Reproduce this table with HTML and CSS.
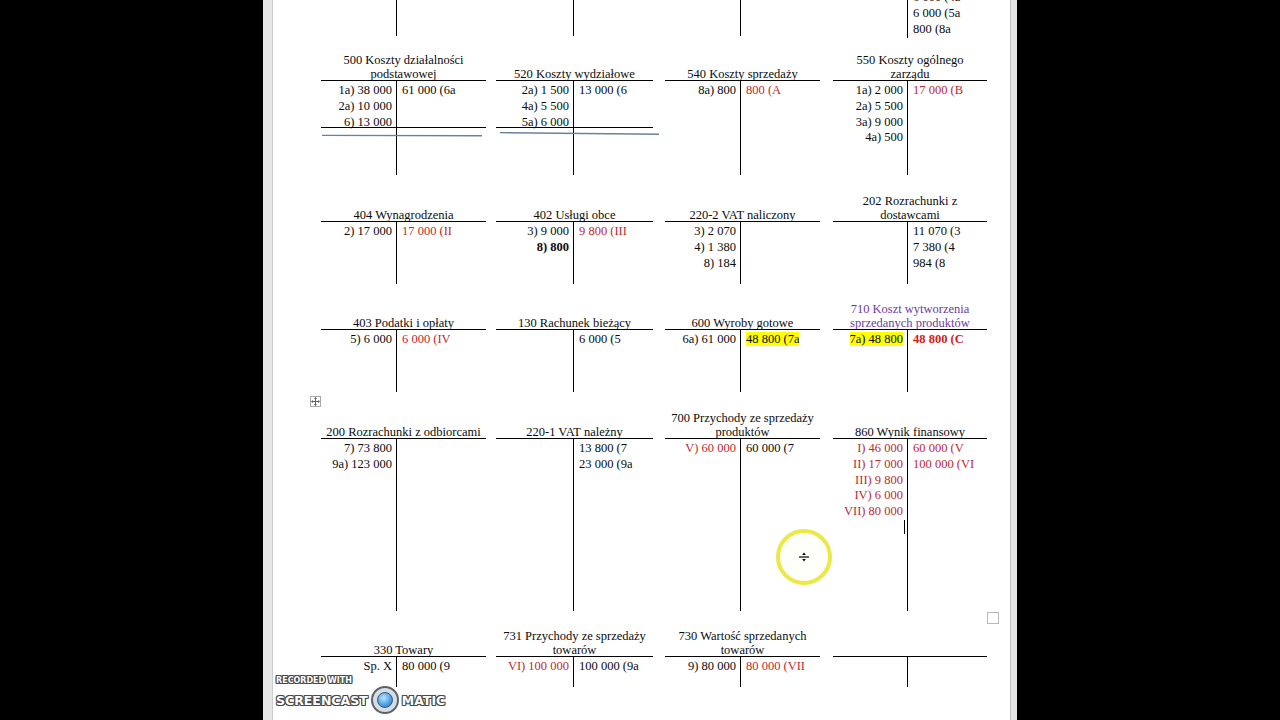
FILE: index.html
```html
<!DOCTYPE html>
<html lang="pl">
<head>
<meta charset="utf-8">
<title>Konta</title>
<link rel="stylesheet" href="styles.css">
</head>
<body>
<div class="viewer">
  <div class="page">
    <div class="sheet">

      <div class="row r0">
        <div class="acct"><div class="body"><div class="dr"></div><div class="cr"></div></div></div>
        <div class="acct"><div class="body"><div class="dr"></div><div class="cr"></div></div></div>
        <div class="acct"><div class="body"><div class="dr"></div><div class="cr"></div></div></div>
        <div class="acct"><div class="body"><div class="dr"></div><div class="cr">
          <div>&nbsp;</div><div>&nbsp;</div><div>&nbsp;</div>
          <div>6 000 (4a</div><div>6 000 (5a</div><div>800 (8a</div>
        </div></div></div>
      </div>

      <div class="row r1">
        <div class="acct">
          <div class="title"><span>500 Koszty działalności<br>podstawowej</span></div>
          <div class="body">
            <div class="dr"><div>1a) 38 000</div><div>2a) 10 000</div><div>6) 13 000</div></div>
            <div class="cr"><div>61 000 (6a</div></div>
            <div class="rule"></div>
            <svg class="ink" width="170" height="60" viewBox="0 0 170 60"><path d="M1 54.4 L161 54.8" /></svg>
          </div>
        </div>
        <div class="acct">
          <div class="title"><span>520 Koszty wydziałowe</span></div>
          <div class="body">
            <div class="dr"><div>2a) 1 500</div><div>4a) 5 500</div><div>5a) 6 000</div></div>
            <div class="cr"><div>13 000 (6</div></div>
            <div class="rule"></div>
            <svg class="ink" width="170" height="60" viewBox="0 0 170 60"><path d="M4 51.6 L163 53.2" /></svg>
          </div>
        </div>
        <div class="acct">
          <div class="title"><span>540 Koszty sprzedaży</span></div>
          <div class="body">
            <div class="dr"><div>8a) 800</div></div>
            <div class="cr"><div class="red">800 (A</div></div>
          </div>
        </div>
        <div class="acct">
          <div class="title"><span>550 Koszty ogólnego<br>zarządu</span></div>
          <div class="body">
            <div class="dr"><div>1a) 2 000</div><div>2a) 5 500</div><div>3a) 9 000</div><div>4a) 500</div></div>
            <div class="cr"><div class="red">17 000 (B</div></div>
          </div>
        </div>
      </div>

      <div class="row r2">
        <div class="acct">
          <div class="title"><span>404 Wynagrodzenia</span></div>
          <div class="body">
            <div class="dr"><div>2) 17 000</div></div>
            <div class="cr"><div class="red">17 000 (II</div></div>
          </div>
        </div>
        <div class="acct">
          <div class="title"><span>402 Usługi obce</span></div>
          <div class="body">
            <div class="dr"><div>3) 9 000</div><div class="b">8) 800</div></div>
            <div class="cr"><div class="red">9 800 (III</div></div>
          </div>
        </div>
        <div class="acct">
          <div class="title"><span>220-2 VAT naliczony</span></div>
          <div class="body">
            <div class="dr"><div>3) 2 070</div><div>4) 1 380</div><div>8) 184</div></div>
            <div class="cr"></div>
          </div>
        </div>
        <div class="acct">
          <div class="title"><span>202 Rozrachunki z<br>dostawcami</span></div>
          <div class="body">
            <div class="dr"></div>
            <div class="cr"><div>11 070 (3</div><div>7 380 (4</div><div>984 (8</div></div>
          </div>
        </div>
      </div>

      <div class="row r3">
        <div class="acct">
          <div class="title"><span>403 Podatki i opłaty</span></div>
          <div class="body">
            <div class="dr"><div>5) 6 000</div></div>
            <div class="cr"><div class="red">6 000 (IV</div></div>
          </div>
        </div>
        <div class="acct">
          <div class="title"><span>130 Rachunek bieżący</span></div>
          <div class="body">
            <div class="dr"></div>
            <div class="cr"><div>6 000 (5</div></div>
          </div>
        </div>
        <div class="acct">
          <div class="title"><span>600 Wyroby gotowe</span></div>
          <div class="body">
            <div class="dr"><div>6a) 61 000</div></div>
            <div class="cr"><div><span class="hl">48 800 (7a</span></div></div>
          </div>
        </div>
        <div class="acct">
          <div class="title purple"><span>710 Koszt wytworzenia<br>sprzedanych produktów</span></div>
          <div class="body">
            <div class="dr"><div><span class="hl">7a) 48 800</span></div></div>
            <div class="cr"><div class="red-b">48 800 (C</div></div>
          </div>
        </div>
      </div>

      <div class="row r4">
        <div class="acct">
          <div class="title"><span>200 Rozrachunki z odbiorcami</span></div>
          <div class="body">
            <div class="dr"><div>7) 73 800</div><div>9a) 123 000</div></div>
            <div class="cr"></div>
          </div>
        </div>
        <div class="acct">
          <div class="title"><span>220-1 VAT należny</span></div>
          <div class="body">
            <div class="dr"></div>
            <div class="cr"><div>13 800 (7</div><div>23 000 (9a</div></div>
          </div>
        </div>
        <div class="acct">
          <div class="title"><span>700 Przychody ze sprzedaży<br>produktów</span></div>
          <div class="body">
            <div class="dr"><div class="red">V) 60 000</div></div>
            <div class="cr"><div>60 000 (7</div></div>
          </div>
        </div>
        <div class="acct">
          <div class="title"><span>860 Wynik finansowy</span></div>
          <div class="body">
            <div class="dr red">
              <div>I) 46 000</div><div>II) 17 000</div><div>III) 9 800</div><div>IV) 6 000</div><div>VII) 80 000</div>
              <div><span class="caret"></span></div>
            </div>
            <div class="cr red"><div>60 000 (V</div><div>100 000 (VI</div></div>
          </div>
        </div>
      </div>

      <div class="row r5">
        <div class="acct">
          <div class="title"><span>330 Towary</span></div>
          <div class="body">
            <div class="dr"><div>Sp. X</div></div>
            <div class="cr"><div>80 000 (9</div></div>
          </div>
        </div>
        <div class="acct">
          <div class="title"><span>731 Przychody ze sprzedaży<br>towarów</span></div>
          <div class="body">
            <div class="dr"><div class="red">VI) 100 000</div></div>
            <div class="cr"><div>100 000 (9a</div></div>
          </div>
        </div>
        <div class="acct">
          <div class="title"><span>730 Wartość sprzedanych<br>towarów</span></div>
          <div class="body">
            <div class="dr"><div>9) 80 000</div></div>
            <div class="cr"><div class="red">80 000 (VII</div></div>
          </div>
        </div>
        <div class="acct">
          <div class="title"><span></span></div>
          <div class="body">
            <div class="dr"></div>
            <div class="cr"></div>
          </div>
        </div>
      </div>

    </div>
  </div>
</div>

<div class="handle">
  <svg width="9" height="9" viewBox="0 0 9 9"><path d="M4.5 0.5 L4.5 8.5 M0.5 4.5 L8.5 4.5 M3.3 1.8 L4.5 0.6 L5.7 1.8 M3.3 7.2 L4.5 8.4 L5.7 7.2 M1.8 3.3 L0.6 4.5 L1.8 5.7 M7.2 3.3 L8.4 4.5 L7.2 5.7" /></svg>
</div>
<div class="chk"></div>

<div class="spot"></div>
<svg class="cursor" width="14" height="14" viewBox="0 0 14 14">
  <path d="M2 7 H12" stroke="#000" stroke-width="1.2"/>
  <path d="M7 2.5 L5.2 5 H8.8 Z M7 11.5 L5.2 9 H8.8 Z" fill="#000"/>
</svg>

<div class="wm">
  <div class="wm-top">RECORDED WITH</div>
  <div class="wm-main"><span>SCREENCAST</span><i class="logo"><i class="logo-in"></i></i><span>MATIC</span></div>
</div>
</body>
</html>
```

FILE: styles.css
```css
html, body {
  margin: 0;
  padding: 0;
  height: 720px;
  overflow: hidden;
  background: #000;
}
body {
  position: relative;
  font-family: "Liberation Serif", "Times New Roman", serif;
}

.viewer {
  margin-left: 263px;
  width: 754px;
  height: 720px;
  box-sizing: border-box;
  background: #e6e6e6;
  padding: 0 6px 0 9px;
}
.page {
  height: 720px;
  background: #fff;
  border-left: 1px solid #cdcdcd;
  border-right: 1px solid #c4c4c4;
  box-sizing: border-box;
  overflow: hidden;
}
.sheet {
  padding-left: 48px;
}

.row {
  display: grid;
  grid-template-columns: 175px 169px 168px 154px;
  font-size: 12.5px;
  color: #0b0b0b;
  white-space: nowrap;
}
.r0 { margin-top: -59px; --bh: 95px; }
.r1 { --th: 44px; --bh: 95px; }
.r2 { --th: 46px; --bh: 63px; }
.r3 { --th: 45px; --bh: 63px; }
.r4 { --th: 46px; --bh: 173px; }
.r5 { --th: 45px; --bh: 31px; }

.acct:nth-child(1) { width: 165px; --split: 76px; }
.acct:nth-child(2) { width: 157px; --split: 78px; }
.acct:nth-child(3) { width: 155px; --split: 76px; }
.acct:nth-child(4) { width: 154px; --split: 75px; }

.title {
  height: var(--th);
  display: flex;
  flex-direction: column;
  justify-content: flex-end;
  text-align: center;
  line-height: 14px;
}
.title span {
  position: relative;
  top: 1px;
}
.body {
  position: relative;
  height: var(--bh);
  box-sizing: border-box;
  border-top: 1px solid #000;
  display: grid;
  grid-template-columns: var(--split) 1fr;
}
.r0 .body { border-top: none; }

.dr {
  border-right: 1px solid #000;
  text-align: right;
  padding: 2px 4px 0 0;
  line-height: 15.8px;
}
.cr {
  padding: 2px 0 0 5px;
  line-height: 15.8px;
}

.red { color: #bd2a30; }
.red-b { color: #d21c1c; font-weight: bold; }
.b { font-weight: bold; }
.purple { color: #6d3a9c; }
.hl { background: #ffff00; }

.rule {
  position: absolute;
  left: 0;
  right: 0;
  top: 46px;
  border-top: 1px solid #000;
}
.ink {
  position: absolute;
  left: 0;
  top: 0;
  overflow: visible;
}
.ink path {
  stroke: #6b819b;
  stroke-width: 1.4;
  fill: none;
}

.caret {
  display: inline-block;
  width: 1px;
  height: 14px;
  background: #000;
  vertical-align: -3px;
  margin-right: -2px;
}

.handle {
  position: absolute;
  left: 310px;
  top: 396px;
  width: 9px;
  height: 9px;
  border: 1px solid #a8a8a8;
  background: #fff;
  display: flex;
}
.handle svg path {
  stroke: #555;
  stroke-width: 0.9;
  fill: none;
}
.chk {
  position: absolute;
  left: 987px;
  top: 612px;
  width: 10px;
  height: 10px;
  border: 1px solid #b8b8b8;
  background: #fff;
}

.spot {
  position: absolute;
  left: 776px;
  top: 529px;
  width: 56px;
  height: 56px;
  box-sizing: border-box;
  border-radius: 50%;
  border: 4px solid #ece846;
  background: rgba(255, 255, 230, 0.25);
}
.cursor {
  position: absolute;
  left: 797px;
  top: 550px;
}

.wm {
  position: absolute;
  left: 276px;
  top: 676px;
  font-family: "DejaVu Sans", sans-serif;
  font-weight: bold;
  color: #fff;
  text-shadow: 1px 0 #4a4a4a, -1px 0 #4a4a4a, 0 1px #4a4a4a, 0 -1px #4a4a4a,
               1px 1px #4a4a4a, -1px -1px #4a4a4a, 1px -1px #4a4a4a, -1px 1px #4a4a4a;
}
.wm-top {
  font-size: 8px;
  line-height: 10px;
}
.wm-main {
  display: flex;
  align-items: center;
  gap: 3px;
  font-size: 12.5px;
  margin-top: 0;
}
.logo {
  width: 28px;
  height: 28px;
  box-sizing: border-box;
  border-radius: 50%;
  background: #d7dde3;
  border: 2px solid #5a6470;
  display: flex;
  align-items: center;
  justify-content: center;
}
.logo-in {
  width: 14px;
  height: 14px;
  border-radius: 50%;
  background: radial-gradient(circle at 40% 35%, #bfe3ff 0%, #4ea3e6 55%, #1f6fb8 100%);
  border: 1px solid #3a5a7a;
}
```
